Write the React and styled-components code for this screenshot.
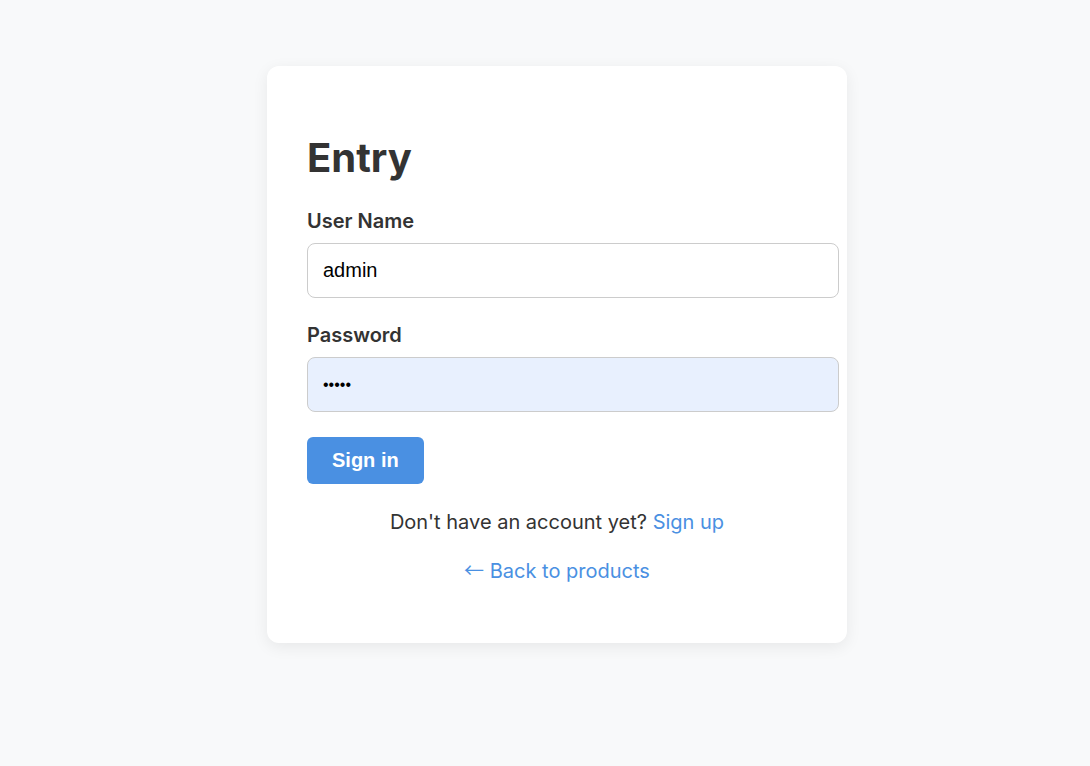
import styled, { createGlobalStyle } from "styled-components";
import { useState } from "react";

const GlobalStyle = createGlobalStyle`
  body {
    margin: 0;
    background-color: #f8f9fa;
    font-family: Inter, "Noto Sans", sans-serif;
    color: #333;
  }
`;

const Page = styled.div`
  min-height: 766px;
  display: flex;
  justify-content: center;
  align-items: flex-start;
  padding: 66px 0 0 24px;
  box-sizing: border-box;
`;

const Card = styled.div`
  width: 580px;
  box-sizing: border-box;
  padding: 40px;
  background-color: #fff;
  border-radius: 12px;
  box-shadow: rgba(0, 0, 0, 0.07) 0px 4px 16px;
`;

const Title = styled.h1`
  font-size: 40px;
  font-weight: 700;
  margin: 27px 0 27px;
  color: #333;
`;

const Group = styled.div`
  margin-bottom: 25px;
`;

const Label = styled.label`
  display: block;
  font-size: 20px;
  font-weight: 600;
  margin-bottom: 10px;
  color: #333;
`;

const Input = styled.input`
  width: 100%;
  padding: 15px;
  border: 1px solid #ccc;
  border-radius: 8px;
  font-family: "Liberation Sans", Arial, sans-serif;
  font-size: ${({ $filled }) => ($filled ? "16px" : "20px")};
  line-height: 23px;
  color: #000;
  background-color: ${({ $filled }) => ($filled ? "#e8f0fe" : "#fff")};
  outline: none;
`;

const Button = styled.button`
  padding: 12px 25px;
  border: none;
  border-radius: 6px;
  background-color: #4a90e2;
  color: #fff;
  font-family: "Liberation Sans", Arial, sans-serif;
  font-size: 20px;
  line-height: 23px;
  font-weight: 700;
  cursor: pointer;
`;

const Text = styled.p`
  text-align: center;
  font-size: 20px;
  line-height: 24px;
  margin: ${({ $top }) => $top}px 0 0;
  color: #333;
`;

const Link = styled.a`
  color: #4a90e2;
  text-decoration: none;
`;

const Arrow = styled.span`
  font-family: "Noto Sans CJK SC", "DejaVu Sans", sans-serif;
  line-height: 1;
`;

const Footer = styled.div`
  height: 20px;
`;

const App = () => {
  const [user, setUser] = useState("admin");
  const [pass, setPass] = useState("admin");

  return (
    <>
      <GlobalStyle />
      <Page>
        <Card>
          <Title>Entry</Title>
          <Group>
            <Label>User Name</Label>
            <Input value={user} onChange={(e) => setUser(e.target.value)} />
          </Group>
          <Group>
            <Label>Password</Label>
            <Input
              $filled
              type="password"
              value={pass}
              onChange={(e) => setPass(e.target.value)}
            />
          </Group>
          <Button>Sign in</Button>
          <Text $top={26}>
            Don't have an account yet? <Link href="#">Sign up</Link>
          </Text>
          <Text $top={25}>
            <Link href="#">
              <Arrow>←</Arrow> Back to products
            </Link>
          </Text>
          <Footer />
        </Card>
      </Page>
    </>
  );
};

export default App;
